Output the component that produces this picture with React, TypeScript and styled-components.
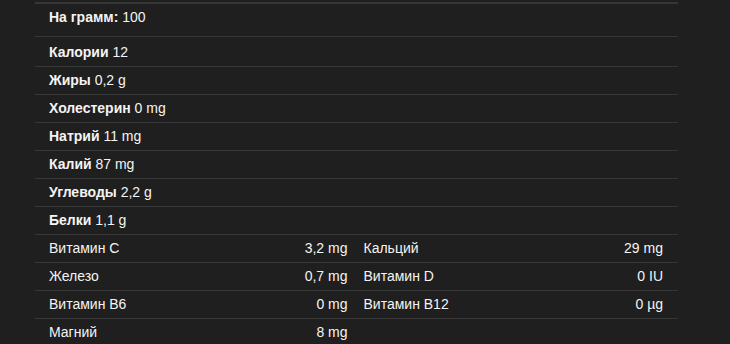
import * as React from 'react';
import styled, {createGlobalStyle} from 'styled-components';

const GlobalStyle = createGlobalStyle`
	html, body {
		margin: 0;
		background: #1f1f1f;
	}
	body {
		color: #f4f4f4;
		font-family: "Liberation Sans", Arial, sans-serif;
		font-size: 14px;
		line-height: 16px;
	}
`;

const Panel = styled.div`
	width: 643px;
	margin-left: 35px;
	padding-top: 2px;
`;

const Row = styled.div<{top?: number; bottom?: number}>`
	padding: ${p => p.top ?? 5}px 0 ${p => p.bottom ?? 6}px 14px;
	border-bottom: 1px solid #363636;
`;

const HeaderRow = styled(Row)`
	border-top: 2px solid #363636;
`;

const Label = styled.b`
	font-weight: bold;
`;

const MicroRow = styled.div`
	display: grid;
	grid-template-columns: 1fr 1fr;
	border-bottom: 1px solid #363636;
`;

const Half = styled.div<{right?: boolean}>`
	display: flex;
	justify-content: space-between;
	padding: 5px ${p => p.right ? 15 : 9}px 6px ${p => p.right ? 7 : 14}px;
`;

const macros = [
	{name: 'Жиры', value: '0,2 g'},
	{name: 'Холестерин', value: '0 mg'},
	{name: 'Натрий', value: '11 mg'},
	{name: 'Калий', value: '87 mg'},
	{name: 'Углеводы', value: '2,2 g'},
	{name: 'Белки', value: '1,1 g'},
];

const micros: [string, string][][] = [
	[['Витамин C', '3,2 mg'], ['Кальций', '29 mg']],
	[['Железо', '0,7 mg'], ['Витамин D', '0 IU']],
	[['Витамин B6', '0 mg'], ['Витамин B12', '0 µg']],
	[['Магний', '8 mg']],
];

const App: React.FC = () =>
	<>
		<GlobalStyle />
		<Panel>
			<HeaderRow top={5} bottom={11}>
				<Label>На грамм:</Label> 100
			</HeaderRow>
			<Row top={7} bottom={6}>
				<Label>Калории</Label> 12
			</Row>
			{macros.map(m =>
				<Row key={m.name}>
					<Label>{m.name}</Label> {m.value}
				</Row>
			)}
			{micros.map((pair, i) =>
				<MicroRow key={i}>
					{pair.map(([name, value], j) =>
						<Half key={name} right={j === 1}>
							<span>{name}</span>
							<span>{value}</span>
						</Half>
					)}
				</MicroRow>
			)}
		</Panel>
	</>;

export default App;
